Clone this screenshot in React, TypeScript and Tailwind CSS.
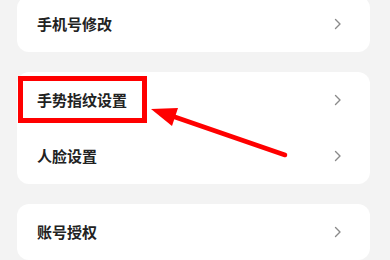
const rows1 = ["手机号修改"];
const rows2 = ["手势指纹设置", "人脸设置"];
const rows3 = ["账号授权"];

function Chevron() {
  return (
    <svg width="8" height="12" viewBox="0 0 8 12" fill="none" className="shrink-0">
      <path d="M1.5 1.5 L6 6 L1.5 10.5" stroke="#8a8a8a" strokeWidth="1.4" strokeLinecap="round" strokeLinejoin="round" />
    </svg>
  );
}

function Row({ label }: { label: string }) {
  return (
    <div className="h-[56px] flex items-center justify-between pl-[20px] pr-[28px]">
      <span className="text-[15px] font-bold text-[#222]">{label}</span>
      <Chevron />
    </div>
  );
}

function Card({ rows }: { rows: string[] }) {
  return (
    <div className="bg-white rounded-[12px]">
      {rows.map((r) => (
        <Row key={r} label={r} />
      ))}
    </div>
  );
}

export default function App() {
  return (
    <div
      className="relative w-[390px] h-[260px] overflow-hidden bg-[#f3f3f3]"
      style={{ fontFamily: '"Noto Sans CJK SC", "Noto Sans", sans-serif' }}
    >
      <div className="-mt-[4px] pl-[17px] pr-[20px] flex flex-col gap-[20px]">
        <Card rows={rows1} />
        <Card rows={rows2} />
        <Card rows={rows3} />
      </div>

      {/* annotation */}
      <div className="absolute left-[18px] top-[76px] w-[129px] h-[47px] border-[5px] border-[#ff0000]" />
      <svg className="absolute left-0 top-0" width="390" height="260" viewBox="0 0 390 260">
        <line x1="285" y1="155" x2="172" y2="116" stroke="#ff0000" strokeWidth="4.5" strokeLinecap="round" />
        <polygon points="151,109 178,108 172,126" fill="#ff0000" />
      </svg>
    </div>
  );
}
